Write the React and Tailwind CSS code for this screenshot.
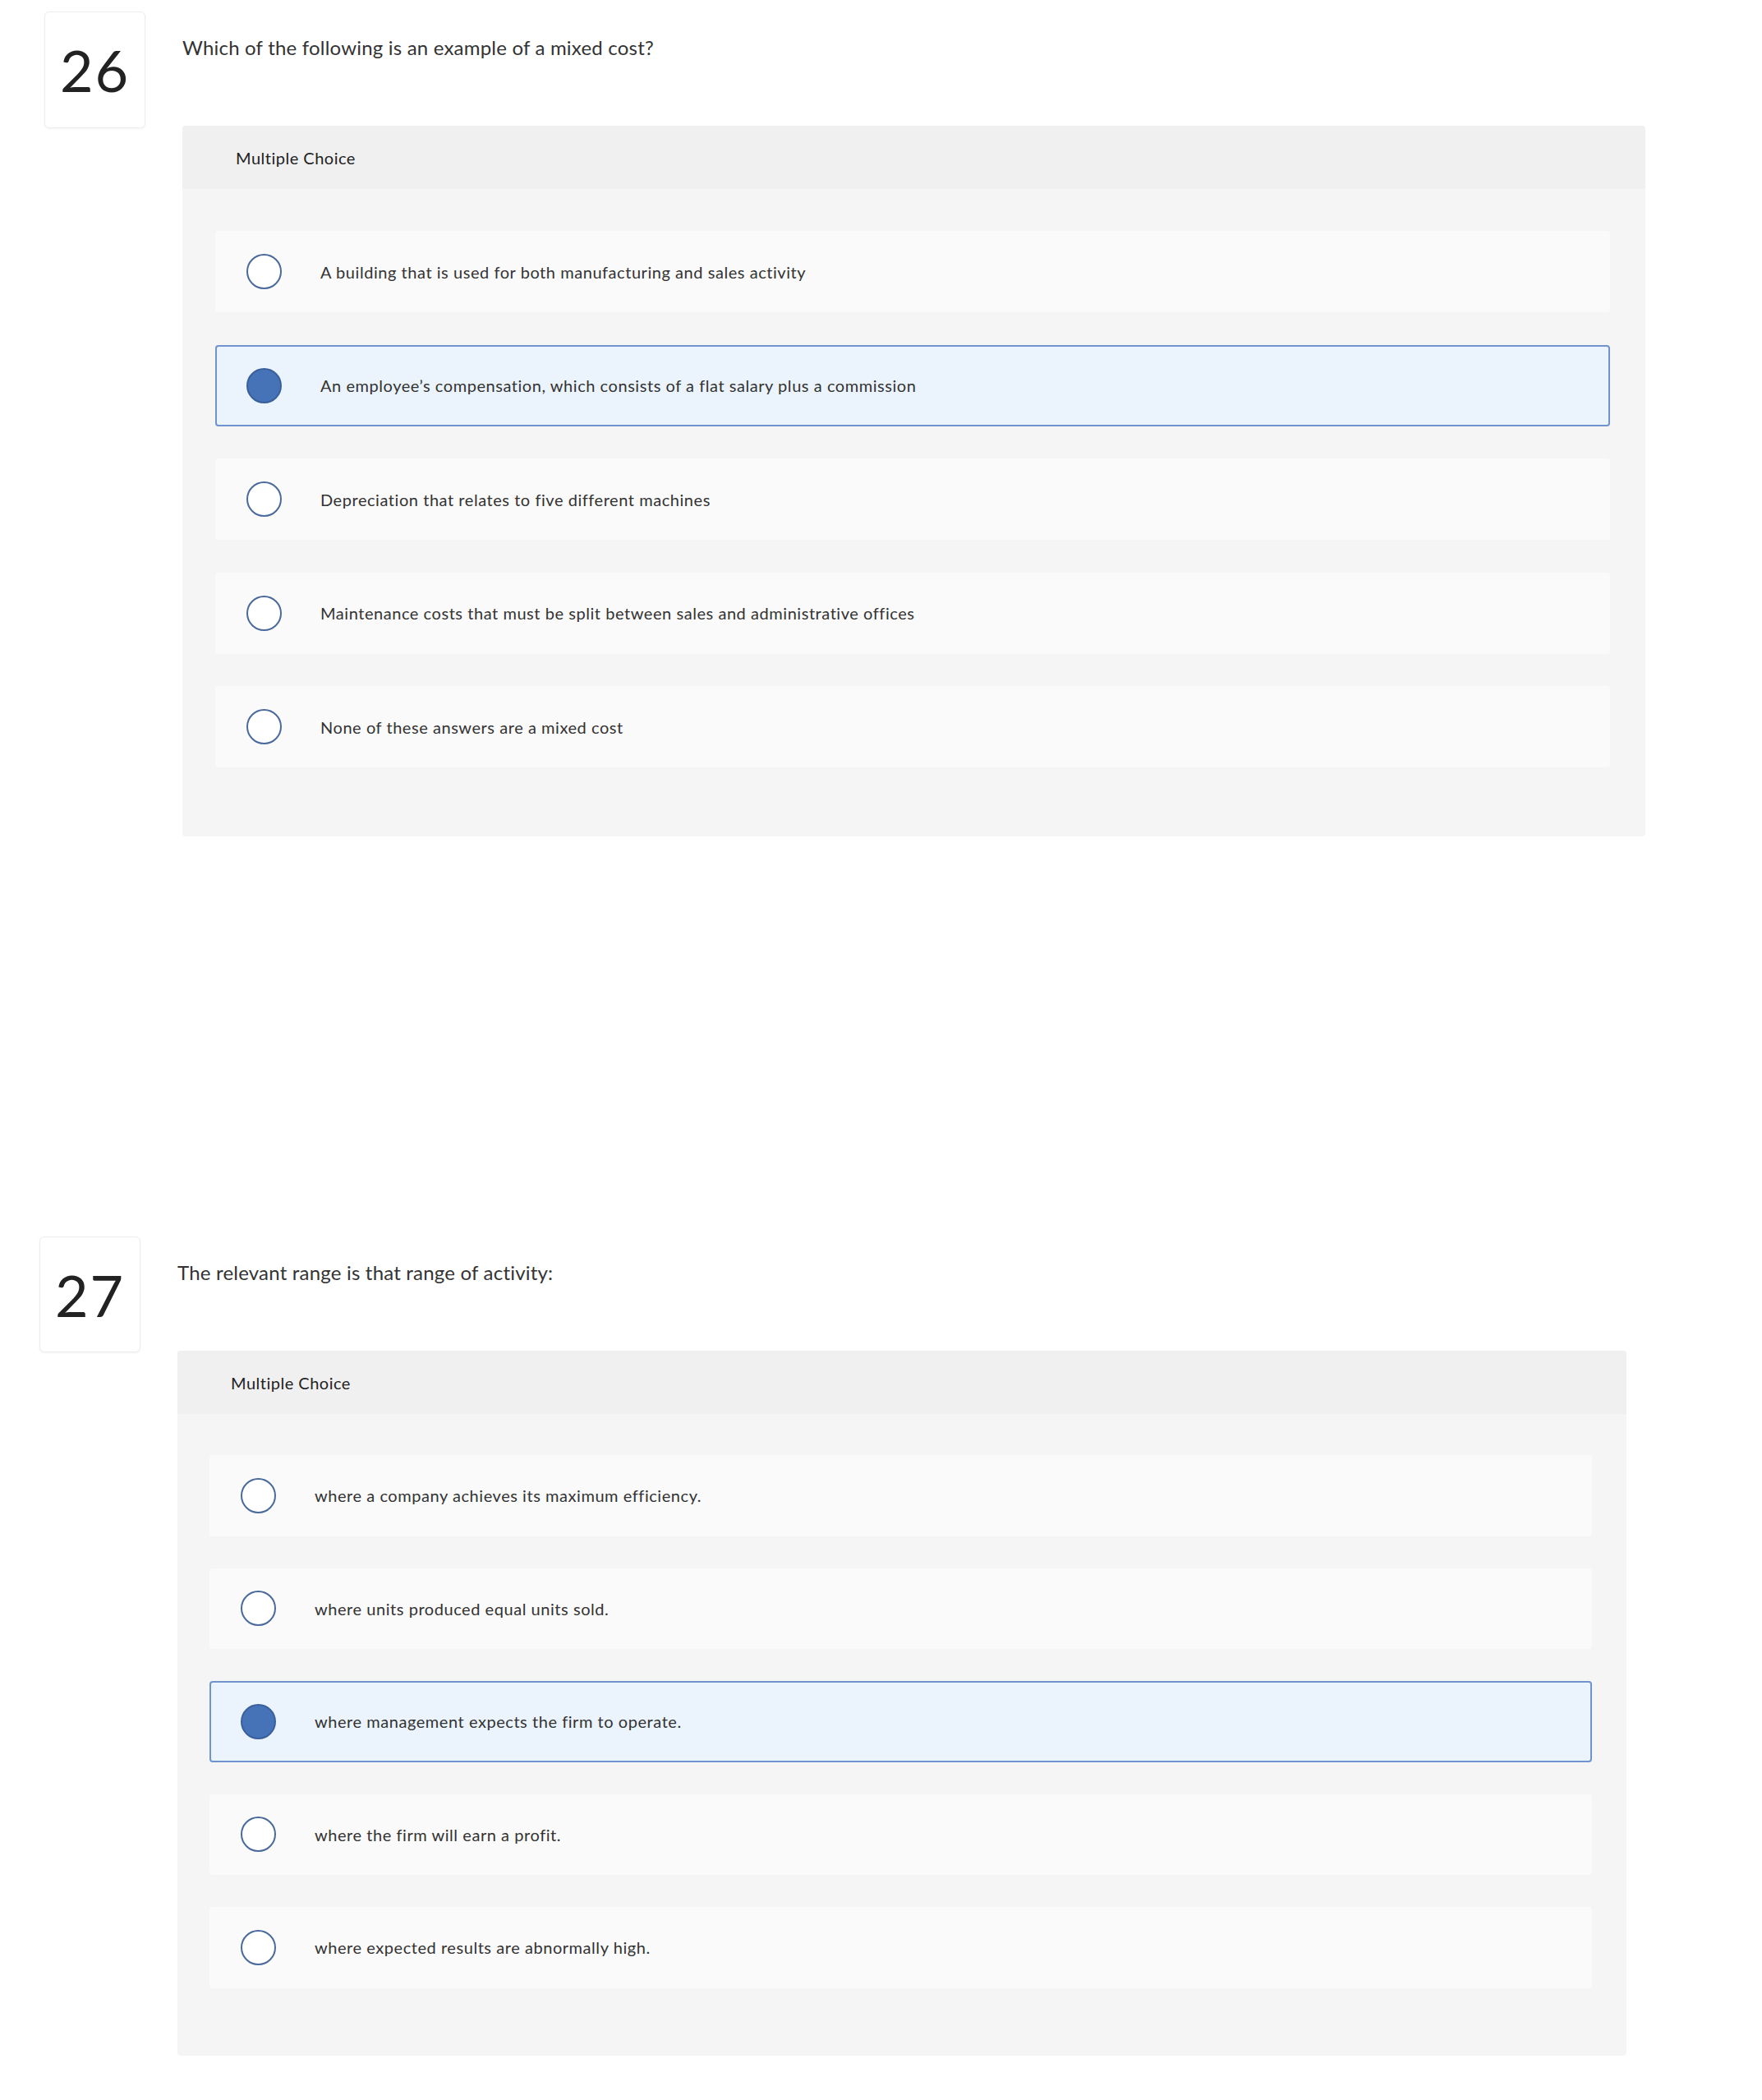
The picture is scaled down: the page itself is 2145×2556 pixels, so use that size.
import { useState } from 'react';

const questions = [
  {
    number: 26,
    prompt: 'Which of the following is an example of a mixed cost?',
    selected: 1,
    choices: [
      'A building that is used for both manufacturing and sales activity',
      'An employee\u2019s compensation, which consists of a flat salary plus a commission',
      'Depreciation that relates to five different machines',
      'Maintenance costs that must be split between sales and administrative offices',
      'None of these answers are a mixed cost',
    ],
    wrap: 'ml-[54px] pt-[14px]',
    box: 'h-[142px]',
    panel: 'w-[1781px] pb-[84px]',
    body: 'pt-[51px] pl-[40px] pr-[43px] gap-[39.5px]',
    row: 'h-[99px]',
  },
  {
    number: 27,
    prompt: 'The relevant range is that range of activity:',
    selected: 2,
    choices: [
      'where a company achieves its maximum efficiency.',
      'where units produced equal units sold.',
      'where management expects the firm to operate.',
      'where the firm will earn a profit.',
      'where expected results are abnormally high.',
    ],
    wrap: 'ml-[48px] mt-[487px]',
    box: 'h-[141px]',
    panel: 'w-[1764px] pb-[82px]',
    body: 'pt-[50px] pl-[39px] pr-[42px] gap-[39px]',
    row: 'h-[98.5px]',
  },
];

const Radio = ({ checked }) =>
  checked ? (
    <span className="block w-[43px] h-[43px] shrink-0 rounded-full bg-[#4672b7] border-2 border-[#3a609c]" />
  ) : (
    <span className="block w-[43px] h-[43px] shrink-0 rounded-full bg-white border-2 border-[#4a6a9c]" />
  );

const Question = ({ q }) => {
  const [picked, setPicked] = useState(q.selected);

  return (
    <div className={`flex items-start ${q.wrap}`}>
      {/* question number card */}
      <div
        className={`w-[123px] ${q.box} shrink-0 flex items-center justify-center bg-white border border-[#ededed] rounded-[6px] shadow-[0_1px_3px_rgba(0,0,0,0.05)]`}
      >
        <span className="text-[70px] leading-none text-[#222] tracking-[2px]">{q.number}</span>
      </div>

      <div className="ml-[45px] flex flex-col">
        <p className="pt-[28px] text-[24px] leading-[32px] text-[#333] tracking-[0.2px]">{q.prompt}</p>

        <div className={`mt-[79px] bg-[#f5f5f5] rounded-[4px] overflow-hidden ${q.panel}`}>
          <div className="h-[77px] flex items-center pl-[65px] bg-[#f0f0f0]">
            <span className="text-[20px] text-[#222] tracking-[0.5px]">Multiple Choice</span>
          </div>

          <div className={`flex flex-col ${q.body}`}>
            {q.choices.map((c, i) => {
              const on = i === picked;
              return (
                <button
                  key={i}
                  type="button"
                  onClick={() => setPicked(i)}
                  className={`${q.row} flex items-center text-left rounded-[4px] border-2 ${
                    on ? 'bg-[#ebf3fc] border-[#6e93cd]' : 'bg-[#fafafa] border-transparent'
                  }`}
                >
                  <span className="ml-[36px]">
                    <Radio checked={on} />
                  </span>
                  <span className="ml-[47px] text-[20px] text-[#333] tracking-[0.55px]">{c}</span>
                </button>
              );
            })}
          </div>
        </div>
      </div>
    </div>
  );
};

export default function App() {
  return (
    <div className="bg-white min-h-[2556px] font-['Lato','Liberation_Sans',sans-serif]">
      {questions.map((q) => (
        <Question key={q.number} q={q} />
      ))}
    </div>
  );
}
